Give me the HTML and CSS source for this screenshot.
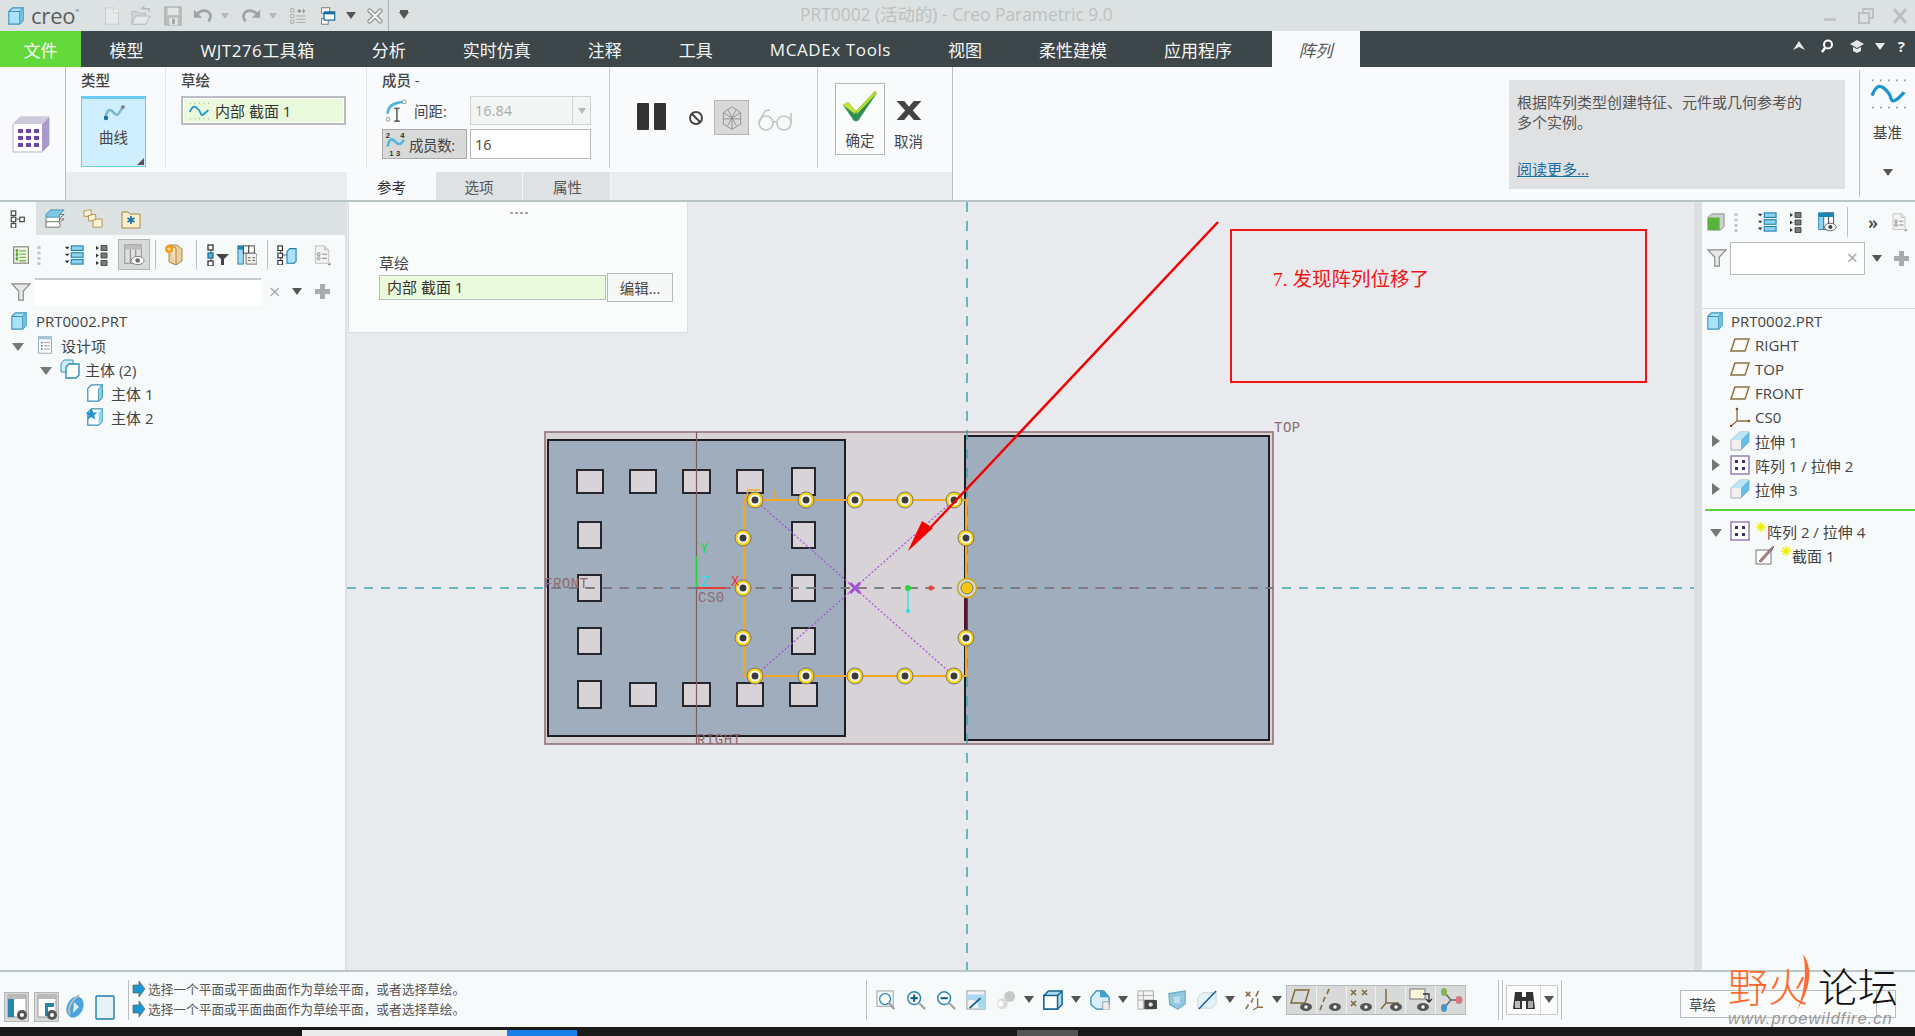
FILE: index.html
```html
<!DOCTYPE html>
<html lang="zh">
<head>
<meta charset="utf-8">
<title>PRT0002 - Creo Parametric 9.0</title>
<link rel="stylesheet" href="styles.css">
</head>
<body>
<svg class="sprite" xmlns="http://www.w3.org/2000/svg">
  <symbol id="cube" viewBox="0 0 20 20"><path d="M2 5 6 1H18V15L14 19H2Z" fill="#a9e2fa" stroke="#3d93b8" stroke-width="1.2"/><path d="M2 5H14V19M14 5 18 1" fill="none" stroke="#3d93b8" stroke-width="1.2"/><path d="M14 5 18 1V15L14 19Z" fill="#6fbfe0"/></symbol>
  <symbol id="body" viewBox="0 0 20 20"><path d="M2 5 6 1H18V15L14 19H2Z" fill="#fff" stroke="#3d93b8" stroke-width="1.4"/><path d="M14 5 18 1V15L14 19Z" fill="#8fd3ef" stroke="#3d93b8"/></symbol>
  <symbol id="bodies" viewBox="0 0 20 20"><path d="M1 5 4 1H13V13H1Z" fill="#cdeefb" stroke="#3d93b8"/><path d="M6 8 9 5H19V16L16 19H6Z" fill="#fff" stroke="#2b86ae" stroke-width="1.3"/></symbol>
  <symbol id="bodystar" viewBox="0 0 20 20"><path d="M2 5 6 1H18V15L14 19H2Z" fill="#fff" stroke="#3d93b8" stroke-width="1.4"/><path d="M14 5 18 1V15L14 19Z" fill="#8fd3ef"/><path d="M6 0 8 5 13 5 9 8 10.500 13 6 10 1.500 13 3 8-1 5H4Z" fill="#2293d2"/></symbol>
  <symbol id="design" viewBox="0 0 18 22"><rect x="1" y="1" width="16" height="20" fill="#fff" stroke="#8a9aa5"/><rect x="1" y="1" width="16" height="3" fill="#9cc7de"/><path d="M4 7h2v2H4zM4 11h2v2H4zM4 15h2v2H4z" fill="#2b86c5"/><path d="M8 8h7M8 12h7M8 16h7" stroke="#7a8a92"/></symbol>
  <symbol id="tree" viewBox="0 0 18 20"><path d="M4 3V17M4 10H12" stroke="#555"/><rect x="1.500" y="1" width="5" height="5" fill="#fff" stroke="#444" stroke-width="1.300"/><rect x="1.500" y="8" width="5" height="5" fill="#fff" stroke="#444" stroke-width="1.300"/><rect x="1.500" y="15" width="5" height="5" fill="#fff" stroke="#444" stroke-width="1.300"/><rect x="11" y="8" width="5" height="5" fill="#fff" stroke="#444" stroke-width="1.300"/></symbol>
  <symbol id="layers" viewBox="0 0 22 22"><path d="M1 15 6 11H21L16 15Q18 20 15 20H1Z" fill="#fff" stroke="#666"/><path d="M1 10 6 6H21L16 10 16 14H1Z" fill="#fff" stroke="#666"/><path d="M1 6 6 1H21L16 6V9H1Z" fill="#7fc7e6" stroke="#4b8fb0"/></symbol>
  <symbol id="folders" viewBox="0 0 22 22"><g fill="#fcf2d6" stroke="#b08c4e"><path d="M1 2H4L5 1H9V8H1Z"/><path d="M6 7H9L10 6H14V13H6Z"/><path d="M11 12H14L15 11H21V20H11Z"/></g></symbol>
  <symbol id="folderstar" viewBox="0 0 20 20"><path d="M1 3H7L9 5H19V19H1Z" fill="#fbedc8" stroke="#a88848"/><path d="M10 7V15M6.500 9 13.500 13M13.500 9 6.500 13" stroke="#1a72b5" stroke-width="1.800"/></symbol>
  <symbol id="treesettings" viewBox="0 0 20 22"><rect x="1" y="1" width="18" height="20" fill="#f4f4ef" stroke="#7d7d75" stroke-width="1.300"/><path d="M5 5V18M8 6H16M8 10H16M8 14H16M8 18H16" stroke="#6bbf3a" stroke-width="1.600"/><path d="M3.500 4h3v3h-3zM3.500 9h3v3h-3zM3.500 14h3v3h-3z" fill="#55a72c"/></symbol>
  <symbol id="grip" viewBox="0 0 6 22"><path d="M1.500 2h3v3h-3zM1.500 7.500h3v3h-3zM1.500 13h3v3h-3zM1.500 18h3v3h-3z" fill="#c5c8c8"/></symbol>
  <symbol id="expand" viewBox="0 0 22 22"><path d="M1 2H6L3.500 5ZM1 9.500H6L3.500 12.500ZM1 17H6L3.500 20Z" fill="#333"/><g fill="#8ed2ef" stroke="#1a7fae" stroke-width="1.200"><rect x="8" y="1" width="13" height="5"/><rect x="8" y="8.500" width="13" height="5"/><rect x="8" y="16" width="13" height="5"/></g></symbol>
  <symbol id="collapse" viewBox="0 0 12 22"><path d="M0 2 3 4 0 6ZM0 9.500 3 11.500 0 13.500ZM0 17 3 19 0 21Z" fill="#333"/><path d="M5 1.500h6v5H5zM5 9h6v5H5zM5 16.500h6v5H5z" fill="#7b7b7b" stroke="#333" stroke-width=".8"/></symbol>
  <symbol id="coleye" viewBox="0 0 22 24"><g fill="#dfe1e1" stroke="#8c8c8c"><rect x="1" y="1" width="6" height="20"/><rect x="7" y="1" width="6" height="20"/><rect x="13" y="1" width="6" height="20"/></g><path d="M1 1H19V6H1Z" fill="#bcbcbc"/><ellipse cx="15" cy="18" rx="7" ry="4.500" fill="#fff" stroke="#777"/><circle cx="15" cy="18" r="2.500" fill="#6b6b6b"/></symbol>
  <symbol id="coleyeblue" viewBox="0 0 22 24"><g fill="#fff" stroke="#333"><rect x="7" y="1" width="6" height="20"/><rect x="13" y="1" width="6" height="20"/></g><rect x="1" y="1" width="6" height="20" fill="#8ed2ef" stroke="#1a7fae"/><path d="M1 1H19V6H1Z" fill="#1a86b5"/><ellipse cx="15" cy="18" rx="7" ry="4.500" fill="#fff" stroke="#444"/><circle cx="15" cy="18" r="2.500" fill="#444"/></symbol>
  <symbol id="foldernew" viewBox="0 0 20 24"><path d="M5 2H13L18 6V18L12 22 5 19Z" fill="#eccf9f" stroke="#a88848"/><path d="M5 2 12 5V22" fill="#f5ddb5" stroke="#a88848"/><circle cx="5" cy="6" r="4" fill="#f49b1c"/><circle cx="5" cy="6" r="1.600" fill="#ffe58a"/></symbol>
  <symbol id="treefilter" viewBox="0 0 22 22"><path d="M4 3V20" stroke="#555"/><rect x="1" y="1" width="5" height="5" fill="#fff" stroke="#333" stroke-width="1.300"/><rect x="1" y="9" width="5" height="5" fill="#5db2dd" stroke="#1a6f9c" stroke-width="1.300"/><rect x="1" y="17" width="5" height="5" fill="#fff" stroke="#333" stroke-width="1.300"/><path d="M9 10H22L17 15V21H14V15Z" fill="#444"/></symbol>
  <symbol id="coldoc" viewBox="0 0 22 22"><g fill="#9ed8f2" stroke="#1a7fae"><rect x="1" y="1" width="6" height="20"/></g><rect x="7" y="1" width="6" height="8" fill="#fff" stroke="#333"/><rect x="13" y="1" width="6" height="8" fill="#fff" stroke="#333"/><path d="M1 1H7V5H1Z" fill="#1a86b5"/><path d="M10 9H20L22 11V21H10Z" fill="#f0f0f0" stroke="#666"/><path d="M12 14h3M17 14h3M12 17h3M17 17h3" stroke="#555"/></symbol>
  <symbol id="treefolder" viewBox="0 0 22 22"><path d="M4 3V20M4 11H12" stroke="#555"/><rect x="1" y="1" width="5" height="5" fill="#fff" stroke="#333" stroke-width="1.300"/><rect x="1" y="9" width="5" height="5" fill="#fff" stroke="#333" stroke-width="1.300"/><rect x="1" y="17" width="5" height="5" fill="#fff" stroke="#333" stroke-width="1.300"/><path d="M11 7 14 4H21V18L19 20H11Z" fill="#a9e2fa" stroke="#1a7fae" stroke-width="1.200"/></symbol>
  <symbol id="docopts" viewBox="0 0 20 24"><path d="M2 1H13L18 6V22H2Z" fill="#f3f3f3" stroke="#bbb"/><path d="M13 1V6H18" fill="#ddd" stroke="#bbb"/><circle cx="6" cy="11" r="1.800" fill="none" stroke="#777"/><circle cx="6" cy="16" r="1.800" fill="none" stroke="#777"/><path d="M10 11h6M10 16h6" stroke="#777"/><path d="M17 24 20 21V24Z" fill="#666"/></symbol>
  <symbol id="funnel" viewBox="0 0 22 20"><path d="M1 1H21L13.500 9V19H8.500V9Z" fill="#e9e9e9" stroke="#8a8a8a" stroke-width="1.300"/></symbol>
  <symbol id="plane" viewBox="0 0 20 14"><path d="M1 13 5 1H19L15 13Z" fill="#fbfbf7" stroke="#8c7240" stroke-width="1.500"/></symbol>
  <symbol id="csys" viewBox="0 0 20 20"><path d="M7 2V14L1 19M7 14H19" fill="none" stroke="#8c7240" stroke-width="1.300"/><circle cx="7" cy="2" r="1.300" fill="#6d5528"/><circle cx="19" cy="14" r="1.300" fill="#6d5528"/><circle cx="1" cy="19" r="1.300" fill="#6d5528"/></symbol>
  <symbol id="extrude" viewBox="0 0 20 20"><path d="M1 9 10 1H19V11L11 19H1Z" fill="#f0f0f0" stroke="#aaa"/><path d="M1 9 10 1H19L11 9Z" fill="#bce6f6"/><path d="M11 9 19 1V11L11 19Z" fill="#64bfe6"/></symbol>
  <symbol id="pattern" viewBox="0 0 20 20"><rect x="1" y="1" width="18" height="18" fill="#fff" stroke="#9076b3" stroke-width="1.400"/><path d="M5 5h3v3H5zM12 5h3v3h-3zM5 12h3v3H5zM12 12h3v3h-3z" fill="#3b2f6e"/></symbol>
  <symbol id="sketch" viewBox="0 0 20 20"><rect x="1" y="5" width="15" height="14" fill="#fff" stroke="#777"/><path d="M4 16 16 3 19 1 17 5 6 17Z" fill="#c47b7b" stroke="#555" stroke-width=".7"/></symbol>
  <symbol id="star" viewBox="0 0 10 10"><path d="M5 0V10M0 5H10M1.500 1.500 8.500 8.500M8.500 1.500 1.500 8.500" stroke="#f0ee00" stroke-width="1.500"/></symbol>
  <symbol id="greenbox" viewBox="0 0 20 20"><path d="M1 5 5 1H19V15L15 19H1Z" fill="#cfcfcf" stroke="#888"/><rect x="1" y="5" width="13" height="14" fill="#58b33c"/></symbol>
  <symbol id="new" viewBox="0 0 18 22"><path d="M1 1H11L17 7V21H1Z" fill="#e6e9e9" stroke="#c6caca"/><path d="M11 1V7H17" fill="#f3f4f4" stroke="#c6caca"/></symbol>
  <symbol id="open" viewBox="0 0 22 22"><path d="M1 20V6H7L9 8H16V20Z" fill="#d0d4d4" stroke="#b5baba"/><path d="M1 20 5 11H21L16 20Z" fill="#e5e8e8" stroke="#b5baba"/><path d="M11 4 14 1 14 3H20V6" fill="none" stroke="#b5baba" stroke-width="1.500"/></symbol>
  <symbol id="save" viewBox="0 0 20 22"><path d="M1 1H19V21H1Z" fill="#b9bebe" stroke="#a6abab"/><rect x="4" y="2" width="12" height="8" fill="#e4e6e6"/><rect x="6" y="13" width="9" height="8" fill="#e4e6e6"/><rect x="9" y="14" width="3" height="6" fill="#9fa4a4"/></symbol>
  <symbol id="undo" viewBox="0 0 22 18"><path d="M3 8Q10 1 16 4 22 8 17 15" fill="none" stroke="#9ea3a3" stroke-width="3"/><path d="M1 2V11H10Z" fill="#9ea3a3"/></symbol>
  <symbol id="redo" viewBox="0 0 22 18"><path d="M19 8Q12 1 6 4 0 8 5 15" fill="none" stroke="#9ea3a3" stroke-width="3"/><path d="M21 2V11H12Z" fill="#9ea3a3"/></symbol>
  <symbol id="regen" viewBox="0 0 20 22"><path d="M1 2h4v4H1zM1 9h4v4H1zM1 16h4v4H1z" fill="none" stroke="#aaa"/><path d="M8 11h11M8 15h11M8 19h11" stroke="#aaa" stroke-width="1.300"/><path d="M9 5 12 2V4H14V6H12V8ZM19 5 16 2V8Z" fill="#8e9393"/></symbol>
  <symbol id="windows" viewBox="0 0 20 22"><rect x="1" y="1" width="10" height="7" fill="#fff" stroke="#666"/><rect x="1" y="14" width="8" height="7" fill="#fff" stroke="#666"/><rect x="4" y="6" width="13" height="10" fill="#fff" stroke="#1a6f9c" stroke-width="1.500"/><rect x="4" y="6" width="13" height="3" fill="#1a6f9c"/></symbol>
  <symbol id="closewin" viewBox="0 0 20 16"><path d="M4 2 16 14M16 2 4 14" stroke="#8e9292" stroke-width="5" stroke-linecap="round"/><path d="M4 2 16 14M16 2 4 14" stroke="#f4f4f4" stroke-width="2.400" stroke-linecap="round"/></symbol>
  <symbol id="patternbig" viewBox="0 0 38 38"><path d="M1 9 8 2H37V30L30 37H1Z" fill="#fff" stroke="#b5b5c2"/><path d="M30 9 37 2V30L30 37Z" fill="#a999cc"/><path d="M1 9 8 2H37L30 9Z" fill="#cfc9dd"/><path d="M6 14h5v4H6zM14 14h5v4h-5zM22 14h5v4h-5zM6 21h5v4H6zM14 21h5v4h-5zM22 21h5v4h-5zM6 28h5v4H6zM14 28h5v4h-5zM22 28h5v4h-5z" fill="#6b46a8"/></symbol>
  <symbol id="curve" viewBox="0 0 22 18"><path d="M2 14Q5 3 9 7T14 11 20 3" fill="none" stroke="#7fb8c8" stroke-width="2.600"/><circle cx="3" cy="14" r="2.200" fill="#1c6d94"/><circle cx="20" cy="3" r="1.800" fill="#777"/></symbol>
  <symbol id="sinebox" viewBox="0 0 22 20"><g fill="#8c9a9a"><path d="M1 1h1v1H1zM6 1h1v1H6zM11 1h1v1h-1zM16 1h1v1h-1zM21 1h1v1h-1zM1 9h1v1H1zM21 9h1v1h-1zM1 18h1v1H1zM6 18h1v1H6zM11 18h1v1h-1zM16 18h1v1h-1zM21 18h1v1h-1z"/></g><path d="M1 11Q4 3 8 6T13 13 21 9" fill="none" stroke="#1c96cf" stroke-width="2"/></symbol>
  <symbol id="spacing" viewBox="0 0 22 26"><path d="M2 16Q2 4 20 3" fill="none" stroke="#4fb5de" stroke-width="3"/><circle cx="20" cy="3" r="2" fill="#fff" stroke="#888"/><circle cx="2.500" cy="22" r="2" fill="#fff" stroke="#888"/><path d="M9 10H15M9 24H15M12 10V24" stroke="#333" stroke-width="1.300"/></symbol>
  <symbol id="count" viewBox="0 0 26 30"><path d="M3 18Q6 5 12 12T22 10" fill="none" stroke="#4fb5de" stroke-width="3"/><text x="1" y="8" class="mini">2</text><text x="18" y="8" class="mini">4</text><text x="5" y="29" class="mini">1</text><text x="13" y="29" class="mini">3</text></symbol>
  <symbol id="noentry" viewBox="0 0 16 16"><circle cx="8" cy="8" r="6" fill="#fff" stroke="#444" stroke-width="2"/><path d="M4 4 12 12" stroke="#444" stroke-width="2"/></symbol>
  <symbol id="wire" viewBox="0 0 28 30"><path d="M4 9 14 2 24 9V22L14 28 4 22ZM4 9 14 15 24 9M14 15V28M9 5 19 24M19 5 9 24M4 16 24 16" fill="none" stroke="#8b8b8b" stroke-width="1"/></symbol>
  <symbol id="glasses" viewBox="0 0 36 22"><circle cx="9" cy="14" r="7" fill="none" stroke="#c2c5c5" stroke-width="1.600"/><circle cx="27" cy="14" r="7" fill="none" stroke="#c2c5c5" stroke-width="1.600"/><path d="M16 14Q18 11 20 14M2 14 8 2 13 1M34 14V4" fill="none" stroke="#c2c5c5" stroke-width="1.600"/></symbol>
  <symbol id="check" viewBox="0 0 36 32"><path d="M1 15 6 12 14 21 33 1 35 3 16 31H12Z" fill="#2f8f52"/><path d="M14 21 33 1 35 3 15 24Z" fill="#b9dd2e"/><path d="M1 15 6 12 14 21 13 24Z" fill="#c6e23a"/></symbol>
  <symbol id="cross" viewBox="0 0 28 22"><path d="M1 1H9L14 7 19 1H27L18 11 27 21H19L14 15 9 21H1L10 11Z" fill="#444"/></symbol>
  <symbol id="sbox" viewBox="0 0 22 28"><rect x="2" y="2" width="18" height="22" fill="#fff" stroke="#999"/><rect x="2" y="2" width="18" height="4" fill="#bbb"/><rect x="2" y="6" width="6" height="18" fill="#2a85ad"/><circle cx="16" cy="22" r="5" fill="#555"/><circle cx="16" cy="22" r="2" fill="#fff"/></symbol>
  <symbol id="sbox2" viewBox="0 0 22 28"><rect x="2" y="2" width="18" height="22" fill="#fff" stroke="#999"/><rect x="2" y="2" width="18" height="4" fill="#bbb"/><rect x="9" y="10" width="9" height="4" fill="#2a85ad"/><rect x="9" y="10" width="3" height="13" fill="#2a85ad"/><circle cx="16" cy="22" r="5" fill="#555"/><circle cx="16" cy="22" r="2" fill="#fff"/></symbol>
  <symbol id="globe" viewBox="0 0 22 28"><ellipse cx="11" cy="14" rx="8" ry="11" fill="#4aa4dc" transform="rotate(25 11 14)"/><path d="M6 22Q2 12 15 2" fill="none" stroke="#bbb" stroke-width="2"/><path d="M10 9 15 14 9 20Z" fill="#d9f0fb"/></symbol>
  <symbol id="pane" viewBox="0 0 22 28"><rect x="2" y="3" width="18" height="23" rx="1" fill="#e8f1f5" stroke="#1f7ea8" stroke-width="1.400"/></symbol>
  <symbol id="arrow" viewBox="0 0 14 16"><path d="M1 4H7V0L13 8 7 16V12H1Z" fill="#1c96d0" stroke="#555" stroke-width=".6"/></symbol>
  <symbol id="zfit" viewBox="0 0 22 22"><rect x="1" y="1" width="18" height="17" fill="#f4f4f4" stroke="#b5b5b5" stroke-width="1.400"/><circle cx="10" cy="10" r="6" fill="#fff" stroke="#2a85ad" stroke-width="1.400"/><path d="M14 14 20 21" stroke="#999" stroke-width="2.400"/></symbol>
  <symbol id="zin" viewBox="0 0 22 22"><circle cx="9" cy="9" r="7" fill="#fff" stroke="#2a85ad" stroke-width="1.600"/><path d="M5 9H13M9 5V13" stroke="#14618a" stroke-width="2.400"/><path d="M14 14 21 21" stroke="#a5a5a5" stroke-width="2.600"/></symbol>
  <symbol id="zout" viewBox="0 0 22 22"><circle cx="9" cy="9" r="7" fill="#fff" stroke="#2a85ad" stroke-width="1.600"/><path d="M5 9H13" stroke="#14618a" stroke-width="2.400"/><path d="M14 14 21 21" stroke="#a5a5a5" stroke-width="2.600"/></symbol>
  <symbol id="refit" viewBox="0 0 22 22"><rect x="1" y="1" width="20" height="20" fill="#f4f4f4" stroke="#aaa" stroke-width="1.200"/><path d="M1 5H21V21H14Q14 8 1 12Z" fill="#a8d9ee"/><path d="M4 20 16 9" stroke="#14618a" stroke-width="2"/></symbol>
  <symbol id="shade" viewBox="0 0 22 22"><circle cx="7" cy="15" r="6" fill="#dcdcdc"/><circle cx="15" cy="7" r="6" fill="#c8c8c8"/><circle cx="5" cy="15" r="3" fill="#fff"/></symbol>
  <symbol id="saved" viewBox="0 0 22 22"><path d="M1 6 6 1H21V16L16 21H1Z" fill="#a9dcf0" stroke="#14618a" stroke-width="1.600"/><path d="M1 6H16V21H1Z" fill="#fff" stroke="#14618a" stroke-width="1.600"/><path d="M16 6 21 1" stroke="#14618a" stroke-width="1.600"/></symbol>
  <symbol id="display" viewBox="0 0 22 22"><path d="M1 8 7 1H15L21 8V16L14 21H7L1 16Z" fill="#d7effa" stroke="#2a85ad" stroke-width="1.300"/><path d="M11 1 15 1 21 8H11Z" fill="#3ea2d1"/><rect x="14" y="13" width="7" height="9" fill="#f0f0f0" stroke="#999"/></symbol>
  <symbol id="camera" viewBox="0 0 22 22"><rect x="1" y="1" width="17" height="20" fill="#f4f4f4" stroke="#aaa"/><path d="M1 6H18M1 11H18M7 1V21" stroke="#aaa"/><rect x="8" y="11" width="14" height="10" rx="1" fill="#444"/><circle cx="15" cy="16" r="3" fill="#ddd" stroke="#222"/></symbol>
  <symbol id="persp" viewBox="0 0 22 22"><path d="M2 4 20 1V15L12 21 3 16Z" fill="#93c8de" stroke="#6aa8c4" stroke-width="1.200"/><path d="M7 8 14 7V15L8 14Z" fill="#bfe1ef"/></symbol>
  <symbol id="section" viewBox="0 0 22 22"><path d="M1 8 6 3H21V15L16 20H1Z" fill="#e2f3fb" stroke="#cfcfcf"/><path d="M2 21 21 1" stroke="#14618a" stroke-width="1.600"/></symbol>
  <symbol id="datum" viewBox="0 0 22 22"><path d="M2 2 7 7M7 2 2 7M16 1 13 7M10 9 8 14M5 16 2 21" stroke="#8c7240" stroke-width="1.800"/><path d="M15 9V19H21M15 19 10 22" fill="none" stroke="#8c7240" stroke-width="1.500"/></symbol>
  <symbol id="dplane" viewBox="0 0 24 24"><path d="M2 15 6 2H20L16 15Z" fill="none" stroke="#806a3c" stroke-width="1.500"/><ellipse cx="17" cy="19" rx="6" ry="4" fill="#555"/><circle cx="17" cy="19" r="1.700" fill="#fff"/></symbol>
  <symbol id="daxis" viewBox="0 0 24 24"><path d="M10 1 8 6M6 9 4 14M3 17 1 22" stroke="#806a3c" stroke-width="1.600"/><ellipse cx="16" cy="19" rx="6" ry="4" fill="#555"/><circle cx="16" cy="19" r="1.700" fill="#fff"/></symbol>
  <symbol id="dpoint" viewBox="0 0 24 24"><path d="M2 2 7 7M7 2 2 7M13 2 18 7M18 2 13 7M2 13 7 18M7 13 2 18" stroke="#806a3c" stroke-width="1.600"/><ellipse cx="17" cy="19" rx="6" ry="4" fill="#555"/><circle cx="17" cy="19" r="1.700" fill="#fff"/></symbol>
  <symbol id="dcsys" viewBox="0 0 24 24"><path d="M7 1V15L2 21M7 15H20" fill="none" stroke="#806a3c" stroke-width="1.500"/><ellipse cx="17" cy="19" rx="6" ry="4" fill="#555"/><circle cx="17" cy="19" r="1.700" fill="#fff"/></symbol>
  <symbol id="dannot" viewBox="0 0 24 24"><rect x="1" y="1" width="15" height="10" fill="#fdf6d8" stroke="#777"/><path d="M14 6H20V14M17 11 20 14 23 11" fill="none" stroke="#333" stroke-width="1.300"/><ellipse cx="14" cy="19" rx="6" ry="4" fill="#555"/><circle cx="14" cy="19" r="1.700" fill="#fff"/></symbol>
  <symbol id="dnodes" viewBox="0 0 24 24"><path d="M5 4 12 12 5 20M12 12H20" fill="none" stroke="#666" stroke-width="1.500"/><ellipse cx="5" cy="4" rx="3" ry="4" fill="#7fb85a"/><ellipse cx="20" cy="12" rx="3.500" ry="4" fill="#d8797c"/><ellipse cx="5" cy="20" rx="3" ry="4" fill="#4e93c8"/></symbol>
  <symbol id="binoc" viewBox="0 0 24 22"><path d="M3 3H10V8H14V3H21L23 20H14V12H10V20H1Z" fill="#333"/><path d="M3 12H8V19H3Z" fill="#bbb"/><path d="M16 12H21V19H16Z" fill="#aaa"/></symbol>
  <g id="handle"><circle r="8" fill="#ffd30b" stroke="#777" stroke-width="1"/><circle r="5.500" fill="#fff"/><circle r="3.500" fill="#3a3a3a"/></g>
</svg>

<header class="titlebar">
  <div class="qat">
    <svg class="i18 logo"><use href="#cube"/></svg>
    <span class="creo">creo<sup>°</sup></span>
    <svg class="i18 m24"><use href="#new"/></svg>
    <svg class="i20 m10"><use href="#open"/></svg>
    <svg class="i20 m12"><use href="#save"/></svg>
    <svg class="i20 m10"><use href="#undo"/></svg>
    <i class="cd pale m8"></i>
    <svg class="i20 m12"><use href="#redo"/></svg>
    <i class="cd pale m8"></i>
    <svg class="i18 m12"><use href="#regen"/></svg>
    <svg class="i18 m13"><use href="#windows"/></svg>
    <i class="cd m8"></i>
    <svg class="i18 m10"><use href="#closewin"/></svg>
    <span class="qsep"></span>
    <i class="cd bar m10"></i>
  </div>
  <div class="doc-title">PRT0002 (活动的) - Creo Parametric 9.0</div>
  <div class="winbtns">
    <span class="wmin"></span>
    <svg class="i16 m22" viewBox="0 0 16 16"><path d="M5 5V1H15V10H11M1 5H11V15H1Z" fill="none" stroke="#bcc0c0" stroke-width="2"/></svg>
    <svg class="i16 m18" viewBox="0 0 16 16"><path d="M2 1 14 15M14 1 2 15" stroke="#bcc0c0" stroke-width="3"/></svg>
  </div>
</header>

<nav class="tabs">
  <a class="tab file">文件</a>
  <a class="tab">模型</a>
  <a class="tab wjt">WJT276工具箱</a>
  <a class="tab">分析</a>
  <a class="tab">实时仿真</a>
  <a class="tab">注释</a>
  <a class="tab">工具</a>
  <a class="tab mcad">MCADEx Tools</a>
  <a class="tab">视图</a>
  <a class="tab">柔性建模</a>
  <a class="tab">应用程序</a>
  <a class="tab current">阵列</a>
  <div class="tab-tools">
    <svg class="i12" viewBox="0 0 12 12"><path d="M0 10 6 1 12 10 6 7Z" fill="#e6e6e6"/></svg>
    <svg class="i14 m15" viewBox="0 0 14 14"><circle cx="8" cy="5.500" r="4" fill="none" stroke="#fff" stroke-width="2"/><path d="M5 9 2 13" stroke="#fff" stroke-width="2.500"/></svg>
    <svg class="i16 m15" viewBox="0 0 16 16"><path d="M8 2 15 6 8 10 1 6ZM4 9V13L8 15 12 13V9L8 11Z" fill="#e6e6e6"/></svg>
    <i class="cd white m10"></i>
    <span class="help">?</span>
  </div>
</nav>

<section class="ribbon">
  <div class="rb-icon"><svg class="i38"><use href="#patternbig"/></svg></div>
  <div class="rb-main">
    <div class="rb-groups">
      <div class="grp g-type">
        <div class="glabel">类型</div>
        <button class="curvebtn"><svg class="curvei"><use href="#curve"/></svg><span>曲线</span></button>
      </div>
      <div class="grp g-sketch">
        <div class="glabel">草绘</div>
        <div class="collector"><svg class="i20"><use href="#sinebox"/></svg><span>内部 截面 1</span></div>
      </div>
      <div class="grp g-member">
        <div class="glabel">成员 -</div>
        <div class="mrow">
          <span class="mlabel"><svg class="i24"><use href="#spacing"/></svg><span>间距:</span></span>
          <span class="field off"><span>16.84</span><i class="fieldbtn"><i class="cd pale"></i></i></span>
        </div>
        <div class="mrow">
          <span class="mlabel on"><svg class="i26"><use href="#count"/></svg><span>成员数:</span></span>
          <span class="field"><span>16</span></span>
        </div>
      </div>
      <div class="grp g-pause">
        <span class="pbar"></span><span class="pbar"></span>
        <svg class="i16"><use href="#noentry"/></svg>
        <span class="wirebtn"><svg class="i26"><use href="#wire"/></svg></span>
        <svg class="glasses"><use href="#glasses"/></svg>
      </div>
      <div class="grp g-ok">
        <button class="okbtn"><svg class="checki"><use href="#check"/></svg><span>确定</span></button>
        <button class="cancelbtn"><svg class="crossi"><use href="#cross"/></svg><span>取消</span></button>
      </div>
    </div>
    <div class="strip">
      <span class="stab active">参考</span>
      <span class="stab">选项</span>
      <span class="stab wide">属性</span>
    </div>
  </div>
  <div class="info">
    <p>根据阵列类型创建特征、元件或几何参考的<br>多个实例。</p>
    <a>阅读更多...</a>
  </div>
  <div class="datumcol">
    <svg class="sine"><use href="#sinebox"/></svg>
    <span>基准</span>
    <i class="cd"></i>
  </div>
</section>

<main class="workspace">
  <aside class="left">
    <div class="lefttabs">
      <span class="ltab active"><svg class="i18"><use href="#tree"/></svg></span>
      <span class="ltab"><svg class="i20"><use href="#layers"/></svg></span>
      <span class="ltab"><svg class="i20"><use href="#folders"/></svg></span>
      <span class="ltab"><svg class="i20"><use href="#folderstar"/></svg></span>
    </div>
    <div class="ltools">
      <svg class="i18"><use href="#treesettings"/></svg>
      <svg class="grip m6"><use href="#grip"/></svg>
      <svg class="i20 m22"><use href="#expand"/></svg>
      <svg class="small m12"><use href="#collapse"/></svg>
      <span class="toggle m10"><svg class="i22"><use href="#coleye"/></svg></span>
      <span class="vsep m5"></span>
      <svg class="i24 m6"><use href="#foldernew"/></svg>
      <span class="vsep m10"></span>
      <svg class="i22 m10"><use href="#treefilter"/></svg>
      <svg class="i20 m8"><use href="#coldoc"/></svg>
      <span class="vsep m10"></span>
      <svg class="i20 m9"><use href="#treefolder"/></svg>
      <svg class="i20 m15"><use href="#docopts"/></svg>
    </div>
    <div class="lfilter">
      <svg class="i20"><use href="#funnel"/></svg>
      <span class="search"></span>
      <span class="x m8">×</span>
      <i class="cd m12"></i>
      <span class="plus m13"></span>
    </div>
    <ul class="tree">
      <li class="row p10"><svg class="i18"><use href="#cube"/></svg><span class="g8">PRT0002.PRT</span></li>
      <li class="row p12"><i class="slot24"><i class="cd big"></i></i><svg class="i18"><use href="#design"/></svg><span class="g7">设计项</span></li>
      <li class="row p40"><i class="slot20"><i class="cd big"></i></i><svg class="i20"><use href="#bodies"/></svg><span class="g5">主体 (2)</span></li>
      <li class="row p86"><svg class="i18"><use href="#body"/></svg><span class="g7">主体 1</span></li>
      <li class="row p86"><svg class="i18"><use href="#bodystar"/></svg><span class="g7">主体 2</span></li>
    </ul>
  </aside>

  <div class="graphics">
    <svg class="scene" viewBox="347 202 1347 768" xmlns="http://www.w3.org/2000/svg">
      <rect x="545" y="432" width="728" height="312" fill="#d7d3d7" stroke="#8d6b70" stroke-width="1.500"/>
      <rect x="548" y="440" width="297" height="296" fill="#9fadbd" stroke="#1c1c22" stroke-width="2"/>
      <rect x="965" y="436" width="304" height="304" fill="#9fadbd" stroke="#1c1c22" stroke-width="2"/>
      <g fill="#d7d3d7" stroke="#26262c" stroke-width="2">
        <rect x="577" y="470" width="26" height="23"/><rect x="630" y="470" width="26" height="23"/><rect x="683" y="470" width="27" height="23"/><rect x="737" y="470" width="26" height="23"/><rect x="792" y="468" width="23" height="27"/>
        <rect x="578" y="522" width="23" height="26"/><rect x="792" y="522" width="23" height="26"/>
        <rect x="578" y="575" width="23" height="26"/><rect x="792" y="575" width="23" height="26"/>
        <rect x="578" y="628" width="23" height="26"/><rect x="792" y="628" width="23" height="26"/>
        <rect x="578" y="681" width="23" height="27"/><rect x="630" y="683" width="26" height="23"/><rect x="683" y="683" width="27" height="23"/><rect x="737" y="683" width="26" height="23"/><rect x="790" y="683" width="27" height="23"/>
      </g>
      <line x1="696.500" y1="432" x2="696.500" y2="744" stroke="#7d5e63" stroke-width="1.200"/>
      <line x1="347" y1="588" x2="1694" y2="588" stroke="#3aa9a9" stroke-width="1.500" stroke-dasharray="9 8"/>
      <line x1="544" y1="588" x2="1273" y2="588" stroke="#8d6b70" stroke-width="1.500" stroke-dasharray="9 8" stroke-dashoffset="9"/>
      <line x1="967" y1="202" x2="967" y2="970" stroke="#3aa9a9" stroke-width="1.500" stroke-dasharray="10 9"/>
      <path d="M755 500 954 676M954 500 755 676" stroke="#a84fd8" stroke-width="1.200" stroke-dasharray="2 2" fill="none"/>
      <path d="M744 500H966V676H744Z" fill="none" stroke="#f2a823" stroke-width="2"/>
      <path d="M746 500 748 490H760M774 490V500" fill="none" stroke="#f2a823" stroke-width="1.500"/>
      <path d="M966 597V632" stroke="#5b1630" stroke-width="3.500"/>
      <use href="#handle" x="755" y="500"/><use href="#handle" x="806" y="500"/><use href="#handle" x="855" y="500"/><use href="#handle" x="905" y="500"/><use href="#handle" x="954" y="500"/>
      <use href="#handle" x="755" y="676"/><use href="#handle" x="806" y="676"/><use href="#handle" x="855" y="676"/><use href="#handle" x="905" y="676"/><use href="#handle" x="954" y="676"/>
      <use href="#handle" x="743" y="538"/><use href="#handle" x="743" y="588"/><use href="#handle" x="743" y="638"/>
      <use href="#handle" x="966" y="538"/><use href="#handle" x="966" y="638"/>
      <circle cx="967" cy="588" r="9.500" fill="#d8d8d0" stroke="#c9a912" stroke-width="1.500"/><circle cx="967" cy="588" r="6" fill="#f7c60b" stroke="#777"/>
      <path d="M850 583 860 593M860 583 850 593" stroke="#a84fd8" stroke-width="3"/>
      <path d="M908 588V611" stroke="#27e0e8" stroke-width="1.300"/><circle cx="908" cy="611" r="2" fill="#27e0e8"/>
      <circle cx="908" cy="588" r="3" fill="#2bd43a"/><circle cx="931" cy="588" r="2.500" fill="#f0403a"/>
      <path d="M696.500 556V587" stroke="#2bd43a" stroke-width="1.800"/><path d="M697 588H725" stroke="#ee3333" stroke-width="1.800"/>
      <text x="700" y="553" class="lab lg">Y</text><text x="701" y="586" class="lab lc">Z</text><text x="731" y="586" class="lab lr">X</text>
      <text x="698" y="602" class="lab">CS0</text><text x="544" y="588" class="lab">FRONT</text><text x="697" y="744" class="lab">RIGHT</text><text x="1274" y="432" class="lab">TOP</text>
      <rect x="1231" y="230" width="415" height="152" fill="none" stroke="#f01414" stroke-width="2"/>
      <text x="1273" y="286" class="note">7. 发现阵列位移了</text>
      <path d="M1218 222 930 528" fill="none" stroke="#f40000" stroke-width="2.400"/>
      <path d="M908 551 922 521 933 528Z" fill="#f40000"/>
    </svg>
    <div class="slidedown">
      <div class="dots"></div>
      <div class="sd-label">草绘</div>
      <div class="sd-row"><span class="sd-field">内部 截面 1</span><button class="sd-btn">编辑...</button></div>
    </div>
  </div>

  <aside class="right">
    <div class="rtools">
      <svg class="i18"><use href="#greenbox"/></svg>
      <svg class="grip m8"><use href="#grip"/></svg>
      <svg class="i20 m18"><use href="#expand"/></svg>
      <svg class="small m13"><use href="#collapse"/></svg>
      <svg class="i20 m15"><use href="#coleyeblue"/></svg>
      <span class="vsep m10"></span>
      <span class="more m20">»</span>
      <svg class="i18 m12"><use href="#docopts"/></svg>
    </div>
    <div class="rfilter">
      <svg class="i20"><use href="#funnel"/></svg>
      <span class="rsearch"><span class="x">×</span></span>
      <i class="cd m7"></i>
      <span class="plus m12"></span>
    </div>
    <ul class="tree rtree">
      <li class="row p4"><svg class="i18"><use href="#cube"/></svg><span class="g7">PRT0002.PRT</span></li>
      <li class="row p28"><svg class="i20 h14"><use href="#plane"/></svg><span class="g5">RIGHT</span></li>
      <li class="row p28"><svg class="i20 h14"><use href="#plane"/></svg><span class="g5">TOP</span></li>
      <li class="row p28"><svg class="i20 h14"><use href="#plane"/></svg><span class="g5">FRONT</span></li>
      <li class="row p28"><svg class="i20"><use href="#csys"/></svg><span class="g5">CS0</span></li>
      <li class="row p10"><i class="slot18"><i class="cr"></i></i><svg class="i20"><use href="#extrude"/></svg><span class="g5">拉伸 1</span></li>
      <li class="row p10"><i class="slot18"><i class="cr"></i></i><svg class="i20"><use href="#pattern"/></svg><span class="g5">阵列 1 / 拉伸 2</span></li>
      <li class="row p10"><i class="slot18"><i class="cr"></i></i><svg class="i20"><use href="#extrude"/></svg><span class="g5">拉伸 3</span></li>
      <li class="insert"></li>
      <li class="row p8"><i class="slot20"><i class="cd big"></i></i><svg class="i20"><use href="#pattern"/></svg><svg class="mark g6"><use href="#star"/></svg><span>阵列 2 / 拉伸 4</span></li>
      <li class="row p53"><svg class="i20"><use href="#sketch"/></svg><svg class="mark g6"><use href="#star"/></svg><span>截面 1</span></li>
    </ul>
  </aside>
</main>

<footer class="status">
  <span class="stoggle"><svg class="i22 h28"><use href="#sbox"/></svg></span>
  <span class="stoggle m5"><svg class="i22 h28"><use href="#sbox2"/></svg></span>
  <svg class="i22 h28 m5 low"><use href="#globe"/></svg>
  <svg class="i22 h28 m8 low"><use href="#pane"/></svg>
  <span class="vsep tall m12"></span>
  <div class="msgs">
    <div class="msg"><svg class="msgi"><use href="#arrow"/></svg>选择一个平面或平面曲面作为草绘平面，或者选择草绘。</div>
    <div class="msg"><svg class="msgi"><use href="#arrow"/></svg>选择一个平面或平面曲面作为草绘平面，或者选择草绘。</div>
  </div>
  <span class="vsep tall"></span>
  <div class="gfx">
    <svg class="i20"><use href="#zfit"/></svg>
    <svg class="i20 m10"><use href="#zin"/></svg>
    <svg class="i20 m10"><use href="#zout"/></svg>
    <svg class="i20 m10"><use href="#refit"/></svg>
    <svg class="i20 m10"><use href="#shade"/></svg>
    <i class="cd m8"></i>
    <svg class="i20 m9"><use href="#saved"/></svg>
    <i class="cd m8"></i>
    <svg class="i20 m9"><use href="#display"/></svg>
    <i class="cd m8"></i>
    <svg class="i20 m9"><use href="#camera"/></svg>
    <svg class="i20 m10"><use href="#persp"/></svg>
    <svg class="i20 m10"><use href="#section"/></svg>
    <i class="cd m8"></i>
    <svg class="i20 m9"><use href="#datum"/></svg>
    <i class="cd m8"></i>
    <div class="dgroup">
      <span><svg class="i24"><use href="#dplane"/></svg></span>
      <span><svg class="i24"><use href="#daxis"/></svg></span>
      <span><svg class="i24"><use href="#dpoint"/></svg></span>
      <span><svg class="i24"><use href="#dcsys"/></svg></span>
      <span><svg class="i24"><use href="#dannot"/></svg></span>
      <span><svg class="i24"><use href="#dnodes"/></svg></span>
    </div>
    <span class="vsep tall m32"></span><span class="vsep tall m3"></span>
    <div class="findbtn"><span><svg class="i24"><use href="#binoc"/></svg></span><span class="findcaret"><i class="cd"></i></span></div>
    <span class="vsep tall m3"></span>
  </div>
  <div class="selbox"><span>草绘</span><i class="selbtn"></i></div>
</footer>
<div class="taskbar"><span class="tk-light"></span><span class="tk-blue"></span><span class="tk-gray"></span></div>

<div class="watermark">
  <svg class="flame" viewBox="0 0 30 60"><path d="M14 0Q30 22 8 60 20 28 14 0Z" fill="#ff6a2e"/></svg>
  <div class="wm-title"><span class="wm-fire">野火</span><span class="wm-forum">论坛</span></div>
  <div class="wm-url">www.proewildfire.cn</div>
</div>
</body>
</html>
```

FILE: styles.css
```css
* { box-sizing: border-box; }
html, body { margin: 0; padding: 0; }
body {
  width: 1915px; height: 1036px; overflow: hidden; position: relative;
  display: flex; flex-direction: column;
  font-family: "Open Sans", "Noto Sans CJK SC", sans-serif;
  font-size: 14.5px; color: #444; background: #f8fafb;
}
.sprite { display: none; }
svg { display: block; flex: none; overflow: visible; }
i { font-style: normal; display: inline-block; flex: none; }
ul { list-style: none; margin: 0; padding: 0; }
p { margin: 0; }
button { font: inherit; color: inherit; padding: 0; background: none; border: 0; }

.i12 { width: 12px; height: 12px; }
.i14 { width: 14px; height: 14px; }
.i16 { width: 16px; height: 16px; }
.i18 { width: 18px; height: 18px; }
.i20 { width: 20px; height: 20px; }
.i22 { width: 22px; height: 22px; }
.i24 { width: 24px; height: 24px; }
.i26 { width: 26px; height: 26px; }
.i38 { width: 38px; height: 38px; }
.h14 { height: 14px; }
.h28 { height: 28px; }
.m3 { margin-left: 3px; } .m5 { margin-left: 5px; } .m6 { margin-left: 6px; } .m7 { margin-left: 7px; }
.m8 { margin-left: 8px; } .m9 { margin-left: 9px; } .m10 { margin-left: 10px; } .m12 { margin-left: 12px; }
.m13 { margin-left: 13px; } .m15 { margin-left: 15px; } .m16 { margin-left: 16px; } .m17 { margin-left: 17px; }
.m18 { margin-left: 18px; } .m20 { margin-left: 20px; } .m22 { margin-left: 22px; } .m24 { margin-left: 24px; }
.m26 { margin-left: 26px; } .m28 { margin-left: 28px; } .m32 { margin-left: 32px; }

.cd { width: 0; height: 0; border-left: 5px solid transparent; border-right: 5px solid transparent; border-top: 7px solid #555; }
.cd.pale { border-top-color: #b5b9b9; border-left-width: 4px; border-right-width: 4px; border-top-width: 6px; }
.cd.white { border-top-color: #eee; }
.cd.bar { box-shadow: 0 -3px 0 -1px #555; }
.cd.big { border-left-width: 6px; border-right-width: 6px; border-top-width: 8px; border-top-color: #777; }
.cr { width: 0; height: 0; border-top: 6px solid transparent; border-bottom: 6px solid transparent; border-left: 8px solid #777; }
.vsep { width: 1px; height: 30px; background: #b9c0c2; flex: none; }
.vsep.tall { height: 40px; }

/* title bar */
.titlebar { height: 31px; background: #dce1e1; display: flex; align-items: center; flex: none; }
.qat { display: flex; align-items: center; width: 420px; padding-left: 7px; }
.creo { font: 22px "Open Sans", sans-serif; color: #5a5f60; margin-left: 6px; letter-spacing: -.2px; line-height: 31px; }
.creo sup { font-size: 9px; line-height: 0; }
.qsep { width: 1px; height: 31px; background: #aeb4b4; margin-left: 4px; }
.doc-title { margin: -4px 0 0 380px; width: 330px; color: #bcc2c2; font-size: 17.4px; white-space: nowrap; }
.winbtns { margin-left: auto; display: flex; align-items: center; padding-right: 7px; }
.wmin { width: 12px; height: 3px; background: #c2c6c6; margin-top: 8px; }

/* tabs */
.tabs { height: 36px; background: #3d4649; display: flex; align-items: stretch; flex: none; }
.tab { color: #f4f6f6; font-size: 17px; padding: 0 28.500px; display: flex; align-items: center; white-space: nowrap; }
.tab.file { background: #62d83a; color: #fff; padding: 0 23.500px; }
.tab.wjt { letter-spacing: .5px; }
.tab.mcad { letter-spacing: .6px; }
.tab.current { background: #f8fafb; color: #555; font-style: italic; padding: 0 27px; margin-left: 11px; }
.tab-tools { margin-left: auto; padding: 0 10px 6px 0; display: flex; align-items: center; }
.help { color: #f0f0f0; font-weight: 700; font-size: 15px; margin-left: 13px; }

/* ribbon */
.ribbon { height: 135px; flex: none; display: flex; background: #f8fafb; border-bottom: 2px solid #b9c4c4; }
.rb-icon { width: 65px; display: flex; align-items: flex-start; padding: 48px 0 0 12px; }
.rb-main { width: 888px; border-left: 1px solid #b9c0c2; border-right: 1px solid #b9c0c2; display: flex; flex-direction: column; }
.rb-groups { height: 105px; display: flex; }
.strip { flex: 1; background: #eaecee; display: flex; padding-left: 281px; }
.stab { width: 87px; background: #dfe2e4; border-right: 1px solid #f4f6f6; display: flex; align-items: center; justify-content: center; font-size: 14.500px; color: #555; }
.stab.active { background: #f8fafb; color: #333; border: 0; width: 89px; }
.stab.wide { width: 88px; padding-left: 2px; }
.grp { position: relative; padding-top: 4px; border-right: 1px solid #c6ccce; margin-bottom: 4px; }
.glabel { font-size: 14.500px; font-weight: 500; line-height: 20px; color: #444; }
.g-type { width: 100px; padding-left: 15px; border-right-color: #e2e5e6; }
.curvebtn { margin-top: 5px; width: 65px; height: 71px; background: #cfeefe; border: 1px solid #6cc8f5; border-top-width: 3px; display: flex; flex-direction: column; align-items: center; padding-top: 5px; gap: 4px; position: relative; font-size: 14.500px; }
.curvebtn::after { content: ""; position: absolute; right: 1px; bottom: 1px; border-left: 7px solid transparent; border-bottom: 7px solid #555; }
.curvei { width: 22px; height: 18px; }
.g-sketch { width: 201px; padding-left: 15px; border-right-color: #e2e5e6; }
.collector { margin-top: 5px; width: 165px; height: 29px; border: 2px solid #b9bdbf; padding: 0 6px; background: #eafadc; outline: 1px solid #fff; outline-offset: -3px; display: flex; align-items: center; gap: 6px; white-space: nowrap; font-size: 15px; }
.collector span { color: #333; }
.g-member { width: 243px; padding-left: 15px; }
.mrow { margin-top: 5px; height: 29px; display: flex; align-items: center; }
.mrow + .mrow { margin-top: 4px; height: 30px; }
.mlabel { width: 85px; height: 100%; display: flex; align-items: center; gap: 2px; white-space: nowrap; font-size: 14.500px; padding-left: 2px; }
.mlabel.on { background: #d8d9d9; border: 1px solid #aaa; letter-spacing: -.4px; }
.mlabel.on .i26 { width: 22px; }
.mlabel svg:not(.i26) { margin-right: 4px; }
.field { margin-left: 3px; width: 121px; height: 100%; border: 1px solid #b5b9bb; background: #fff; display: flex; align-items: center; padding-left: 4px; color: #444; font-size: 14.500px; }
.field.off { color: #a8acac; border-color: #d0d3d3; background: #f3f5f5; }
.field span { flex: 1; }
.fieldbtn { width: 18px; height: 100%; border-left: 1px solid #d0d3d3; display: flex; align-items: center; justify-content: center; }
.g-pause { width: 208px; padding-left: 27px; display: flex; align-items: center; padding-top: 0; }
.pbar { width: 12px; height: 27px; background: #333; margin-right: 5px; margin-top: -3px; border-radius: 1px; }
.g-pause .i16 { margin-left: 17px; margin-top: 0; }
.wirebtn { margin-left: 10px; width: 35px; height: 35px; background: #d8d9d9; border: 1px solid #b5b5b5; display: flex; align-items: center; justify-content: center; }
.glasses { margin-left: 8px; width: 36px; height: 22px; margin-top: 4px; }
.g-ok { width: 134px; border-right: 0; margin: 0; padding: 16px 0 0 17px; display: flex; gap: 7px; }
.okbtn { width: 50px; height: 72px; border: 1px solid #b5b9bb; background: #fafbfb; display: flex; flex-direction: column; align-items: center; padding-top: 6px; gap: 7px; font-size: 14.500px; }
.checki { width: 36px; height: 32px; }
.cancelbtn { width: 33px; height: 72px; display: flex; flex-direction: column; align-items: center; padding-top: 17px; gap: 9px; font-size: 14.500px; }
.crossi { width: 28px; height: 21px; }
.info { margin: 13px 0 0 556px; width: 336px; height: 109px; background: #dfe1e3; padding: 12px 8px; font-size: 15px; color: #555; line-height: 20px; }
.info a { display: block; margin-top: 27px; color: #1a6fa8; text-decoration: underline; }
.datumcol { margin: 3px 0 3px 14px; padding-top: 8px; border-left: 1px solid #b9c0c2; width: 56px; display: flex; flex-direction: column; align-items: center; font-size: 14.500px; }
.sine { width: 36px; height: 32px; }
.datumcol span { margin-top: 11px; }
.datumcol .cd { margin-top: 27px; }

/* workspace */
.workspace { flex: 1; display: flex; min-height: 0; }
.left { width: 347px; flex: none; background: #f7fafb; border-right: 2px solid #dfe1e4; }
.lefttabs { height: 33px; background: #dce1e1; display: flex; }
.ltab { width: 38px; display: flex; align-items: center; justify-content: center; }
.ltab.active { background: #f7fafb; width: 36px; }
.ltools { height: 39px; display: flex; align-items: center; padding-left: 12px; }
.grip { width: 6px; height: 22px; }
.small { width: 12px; height: 22px; }
.toggle { width: 32px; height: 31px; background: #d8d9d9; border: 1px solid #b5b5b5; display: flex; align-items: center; justify-content: center; }
.lfilter { height: 35px; display: flex; align-items: center; padding-left: 11px; }
.search { width: 226px; height: 28px; margin-left: 4px; background: #fff; border-top: 2px solid #c6caca; }
.x { color: #a5a9a9; font-size: 20px; line-height: 20px; }
.plus { width: 15px; height: 15px; background: linear-gradient(#a9adad, #a9adad) center / 100% 5px no-repeat, linear-gradient(#a9adad, #a9adad) center / 5px 100% no-repeat; }
.tree { padding-top: 0; font-size: 15px; }
.row { height: 24px; display: flex; align-items: center; white-space: nowrap; }
.p4 { padding-left: 4px; } .p8 { padding-left: 8px; } .p10 { padding-left: 10px; } .p12 { padding-left: 12px; }
.p28 { padding-left: 28px; } .p40 { padding-left: 40px; } .p53 { padding-left: 53px; } .p86 { padding-left: 86px; }
.slot24 { width: 24px; } .slot20 { width: 20px; } .slot18 { width: 18px; }
.g5 { margin-left: 5px; } .g6 { margin-left: 6px; } .g7 { margin-left: 7px; } .g8 { margin-left: 8px; }
.mark { width: 10px; height: 10px; align-self: flex-start; margin-top: 3px; margin-right: 1px; }

/* graphics */
.graphics { flex: 1; background: #e8eaee; position: relative; min-width: 0; }
.scene { position: absolute; inset: 0; width: 100%; height: 100%; }
.lab { font: 14px "Liberation Mono", monospace; fill: #8d6b70; letter-spacing: .5px; }
.lab.lg { fill: #2bd43a; } .lab.lc { fill: #27e0e8; } .lab.lr { fill: #ee3333; }
.note { font: 19.5px "Liberation Serif", "Noto Sans CJK SC", serif; fill: #f01414; }
.mini { font: 700 9px "Liberation Sans", sans-serif; fill: #333; }
.slidedown { position: absolute; left: 1px; top: 0; width: 340px; height: 131px; background: #fafbfb; border: 1px solid #dadcdf; border-top: 0; padding: 0 0 0 30px; }
.dots { height: 4px; width: 20px; margin: 9px 0 0 130px; background: radial-gradient(circle, #aaa 1.500px, transparent 1.500px) 0 0 / 5px 4px repeat-x; }
.sd-label { margin-top: 38px; height: 20px; line-height: 20px; font-size: 15px; }
.sd-row { margin-top: 0; display: flex; align-items: center; }
.sd-field { width: 227px; height: 25px; background: #eafadc; border: 1px solid #b9bdbf; padding-left: 7px; line-height: 22px; color: #333; font-size: 15px; }
.sd-btn { width: 66px; height: 29px; border: 1px solid #b5b9bb; background: #f6f7f7; margin-left: 1px; font-size: 14.500px; }

/* right panel */
.right { width: 221px; flex: none; background: #f7fafb; border-left: 8px solid #dde0e3; }
.rtools { height: 40px; padding: 0 0 0 5px; display: flex; align-items: center; }
.rtools .vsep { height: 30px; }
.more { font-size: 18px; font-weight: 600; color: #444; }
.rfilter { height: 32px; display: flex; align-items: center; padding-left: 5px; margin-top: 0; }
.rsearch { width: 135px; height: 33px; margin-left: 3px; background: #fff; border: 1px solid #b9bdbf; display: flex; align-items: center; justify-content: flex-end; padding-right: 6px; }
.rtree { margin-top: 34px; border-top: 1px solid #d6dadb; }
.insert { height: 2px; margin: 8px 0 8px 3px; background: #5fcf3a; }

/* status bar */
.status { height: 57px; flex: none; background: #f6fafb; border-top: 2px solid #bcc8c8; display: flex; align-items: center; padding-left: 4px; }
.stoggle { width: 25px; height: 30px; background: #d8d9d9; border: 1px solid #b5b5b5; display: flex; align-items: center; justify-content: center; margin-top: 14px; }
.low { margin-top: 14px; }
.msgs { width: 737px; padding-left: 3px; margin-top: -2px; }
.msg { height: 20px; display: flex; align-items: center; gap: 2px; font-size: 12.700px; color: #555; white-space: nowrap; }
.msgi { width: 14px; height: 16px; }
.gfx { display: flex; align-items: center; padding-left: 9px; }
.dgroup { display: flex; margin-left: 4px; background: #d8d9d9; border: 1px solid #b5b9bb; height: 30px; width: 180px; }
.dgroup span { flex: 1; display: flex; align-items: center; justify-content: center; border-left: 1px solid #f0f0f0; }
.dgroup span:first-child { border-left: 0; }
.findbtn { margin-left: 3px; width: 52px; height: 30px; display: flex; border: 1px solid #c6caca; background: #fcfcfc; }
.findbtn span { width: 34px; display: flex; align-items: center; justify-content: center; }
.findbtn .findcaret { width: 17px; border-left: 1px solid #d6d9d9; }
.selbox { margin: 9px 19px 0 auto; width: 216px; height: 28px; border: 1px solid #b9bdbf; background: #fafbfb; display: flex; align-items: center; justify-content: space-between; padding-left: 8px; font-size: 13.500px; }
.selbtn { width: 19px; height: 100%; border-left: 1px solid #b9bdbf; }

.taskbar { height: 9px; flex: none; background: #1a1a1a; display: flex; align-items: flex-end; padding-left: 302px; }
.taskbar span { height: 6px; display: block; }
.tk-light { width: 205px; background: #ebebeb; }
.tk-blue { width: 70px; background: #1a7fe8; }
.tk-gray { width: 61px; margin-left: 440px; background: #555; }

/* forum watermark over the status bar */
.watermark { position: absolute; left: 1728px; top: 966px; width: 180px; height: 66px; }
.flame { position: absolute; left: 62px; top: -14px; width: 28px; height: 60px; }
.wm-title { font-size: 40px; line-height: 42px; white-space: nowrap; display: flex; gap: 10px; position: relative; font-weight: 300; }
.wm-fire { color: #ff6a2e; }
.wm-forum { color: #111; }
.wm-url { font: italic 16.500px "Liberation Sans", sans-serif; color: #999; letter-spacing: 1px; margin-top: 1px; white-space: nowrap; }
```
